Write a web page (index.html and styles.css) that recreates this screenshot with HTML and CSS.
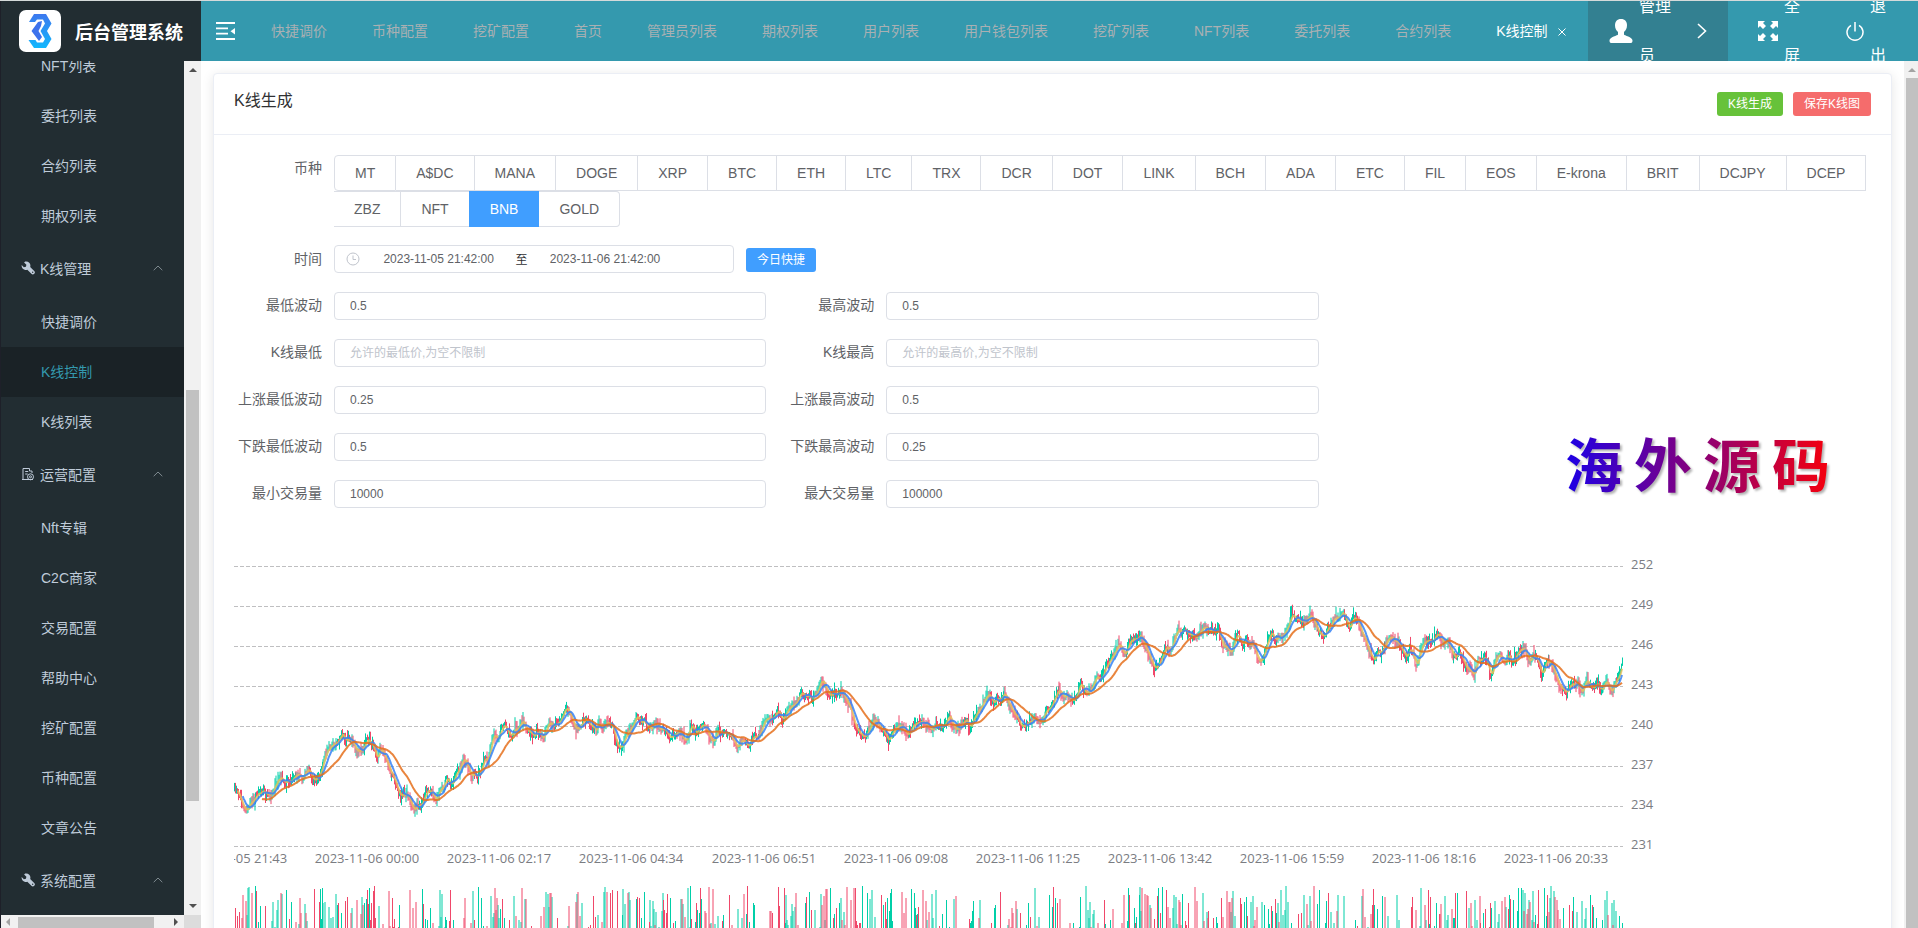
FILE: index.html
```html
<!DOCTYPE html>
<html lang="zh-CN">
<head>
<meta charset="utf-8">
<title>后台管理系统</title>
<link rel="stylesheet" href="styles.css">
</head>
<body>
<svg class="sprite" aria-hidden="true">
  <symbol id="wrench" viewBox="0 0 14 14"><path d="M4.2.6a4.2 4.2 0 0 1 5 5.300l4 4a1.900 1.900 0 0 1-2.800 2.900L6.300 8.700A4.200 4.200 0 0 1 .7 4.100l2.200 2.100 2-.4.500-2-2.300-2.200z"/><circle cx="11.700" cy="11.300" r=".7" fill="#222d32"/></symbol>
  <symbol id="building" viewBox="0 0 14 14"><path d="M5 12.500H1M2 12.500V1.500h6.500v2.500H11v2M4.200 4.500h3M4.200 7h2.500" fill="none" stroke="currentColor"/><circle cx="9.500" cy="9.800" r="3" fill="none" stroke="currentColor"/><circle cx="9.500" cy="9.800" r="1" fill="none" stroke="currentColor"/><path d="M2 12.500h10" stroke="currentColor"/></symbol>
  <symbol id="up" viewBox="0 0 10 6"><path d="M.7 5.200 5 1l4.300 4.200" fill="none" stroke="currentColor"/></symbol>
</svg>
<div class="app">
  <header class="topbar">
    <div class="brand">
      <svg class="brand-logo" viewBox="0 0 42 42">
        <defs><linearGradient id="lg" x1="0" y1="0" x2="0" y2="1"><stop offset="0" stop-color="#3d78ee"/><stop offset="1" stop-color="#12b7fd"/></linearGradient></defs>
        <rect width="42" height="42" rx="7" fill="#fff"/>
        <path d="M10 12 15 4h12l5.500 9.500L28 21l4.500 8L27 38H15L9.500 30h7l1.500 2.500h6l2-3.500-4.500-8 4.500-7.500-2-4h-6L16 12z" fill="url(#lg)"/>
        <path d="m19 12 4-1-1 5-2.500 5 3.500 6-3 4-7.500-10z" fill="#3d72ec"/>
      </svg>
      <span>后台管理系统</span>
    </div>
    <button class="fold" type="button" aria-label="折叠菜单">
      <svg width="19" height="18" viewBox="0 0 19 18"><path d="M0 1h19M0 6.300h12M0 11.600h12M0 17h19" stroke="#fff" stroke-width="1.800"/><path d="M19 6v6.500L14.500 9.200z" fill="#fff"/></svg>
    </button>
    <nav class="tabs">
      <a href="#">快捷调价</a><a href="#">币种配置</a><a href="#">挖矿配置</a><a href="#">首页</a><a href="#">管理员列表</a><a href="#">期权列表</a><a href="#">用户列表</a><a href="#">用户钱包列表</a><a href="#">挖矿列表</a><a href="#">NFT列表</a><a href="#">委托列表</a><a href="#">合约列表</a><a href="#" class="current">K线控制<svg width="8" height="8" viewBox="0 0 8 8"><path d="m.5.5 7 7m0-7-7 7" stroke="#fff"/></svg></a>
    </nav>
    <div class="tools">
      <button type="button" class="tool tool-user">
        <svg width="24" height="24" viewBox="0 0 24 24"><path d="M12 0c4 0 6 2.700 6 6.200 0 3-1.300 5.500-3 6.800v2.500c0 1 8.500 2.500 8.500 6 0 1.500-.5 2.500-1.500 2.500H2c-1 0-1.500-1-1.500-2.500 0-3.500 8.500-5 8.500-6V13c-1.700-1.300-3-3.800-3-6.800C6 2.700 8 0 12 0z" fill="#fff"/></svg>
        <span>管理<br>员</span>
        <svg width="10" height="16" viewBox="0 0 10 16"><path d="m1 1 7.500 7L1 15" fill="none" stroke="#fff" stroke-width="1.600"/></svg>
      </button>
      <button type="button" class="tool tool-full">
        <svg width="20" height="20" viewBox="0 0 20 20"><path d="M0 0h7L5 2l3 3-3 3-3-3-2 2zM20 0h-7l2 2-3 3 3 3 3-3 2 2zM0 20h7l-2-2 3-3-3-3-3 3-2-2zM20 20h-7l2-2-3-3 3-3 3 3 2-2z" fill="#fff"/></svg>
        <span>全<br>屏</span>
      </button>
      <button type="button" class="tool tool-exit">
        <svg width="18" height="19" viewBox="0 0 18 19"><path d="M5 3.300a8 8 0 1 0 8 0M9 0v9.500" fill="none" stroke="#fff" stroke-width="1.500"/></svg>
        <span>退<br>出</span>
      </button>
    </div>
  </header>

  <aside class="side">
    <div class="menu-view">
      <nav class="menu">
        <a href="#">NFT列表</a><a href="#">委托列表</a><a href="#">合约列表</a><a href="#">期权列表</a>
        <button type="button" class="group"><svg class="gi"><use href="#wrench"/></svg>K线管理<svg class="ga"><use href="#up"/></svg></button>
        <a href="#">快捷调价</a><a href="#" class="active">K线控制</a><a href="#">K线列表</a>
        <button type="button" class="group"><svg class="gi"><use href="#building"/></svg>运营配置<svg class="ga"><use href="#up"/></svg></button>
        <a href="#">Nft专辑</a><a href="#">C2C商家</a><a href="#">交易配置</a><a href="#">帮助中心</a><a href="#">挖矿配置</a><a href="#">币种配置</a><a href="#">文章公告</a>
        <button type="button" class="group"><svg class="gi"><use href="#wrench"/></svg>系统配置<svg class="ga"><use href="#up"/></svg></button>
      </nav>
    </div>
    <div class="vbar"><i class="tri tri-up"></i><div class="track"><div class="thumb"></div></div><i class="tri tri-down"></i></div>
    <div class="hbar"><i class="tri tri-left"></i><div class="hthumb"></div><i class="tri tri-right"></i></div>
    <div class="corner"></div>
  </aside>

  <main class="main">
    <section class="card">
      <div class="card-head">
        <h1>K线生成</h1>
        <div class="actions"><button type="button" class="btn green">K线生成</button><button type="button" class="btn red">保存K线图</button></div>
      </div>
      <div class="card-body">
        <form>
          <div class="row coins-row">
            <span class="label" id="coin-label">币种</span>
            <div class="coins" role="radiogroup" aria-labelledby="coin-label">
              <label><input type="radio" name="coin"><span>MT</span></label><label><input type="radio" name="coin"><span>A$DC</span></label><label><input type="radio" name="coin"><span>MANA</span></label><label><input type="radio" name="coin"><span>DOGE</span></label><label><input type="radio" name="coin"><span>XRP</span></label><label><input type="radio" name="coin"><span>BTC</span></label><label><input type="radio" name="coin"><span>ETH</span></label><label><input type="radio" name="coin"><span>LTC</span></label><label><input type="radio" name="coin"><span>TRX</span></label><label><input type="radio" name="coin"><span>DCR</span></label><label><input type="radio" name="coin"><span>DOT</span></label><label><input type="radio" name="coin"><span>LINK</span></label><label><input type="radio" name="coin"><span>BCH</span></label><label><input type="radio" name="coin"><span>ADA</span></label><label><input type="radio" name="coin"><span>ETC</span></label><label><input type="radio" name="coin"><span>FIL</span></label><label><input type="radio" name="coin"><span>EOS</span></label><label><input type="radio" name="coin"><span>E-krona</span></label><label><input type="radio" name="coin"><span>BRIT</span></label><label><input type="radio" name="coin"><span>DCJPY</span></label><label><input type="radio" name="coin"><span>DCEP</span></label><label><input type="radio" name="coin"><span>ZBZ</span></label><label><input type="radio" name="coin"><span>NFT</span></label><label><input type="radio" name="coin" checked><span>BNB</span></label><label><input type="radio" name="coin"><span>GOLD</span></label>
            </div>
          </div>
          <div class="row time-row">
            <label class="label" for="from">时间</label>
            <div class="range">
              <svg viewBox="0 0 14 14"><circle cx="7" cy="7" r="6" fill="none" stroke="#c0c4cc"/><path d="M7 3.500v4h3" fill="none" stroke="#c0c4cc"/></svg>
              <input id="from" type="text" value="2023-11-05 21:42:00"><span>至</span><input type="text" aria-label="结束时间" value="2023-11-06 21:42:00">
            </div>
            <button type="button" class="btn blue">今日快捷</button>
          </div>
          <div class="fields">
            <div class="row"><label class="label" for="f1">最低波动</label><input id="f1" class="input" type="text" value="0.5"></div>
            <div class="row"><label class="label" for="f2">最高波动</label><input id="f2" class="input" type="text" value="0.5"></div>
            <div class="row"><label class="label" for="f3">K线最低</label><input id="f3" class="input" type="text" placeholder="允许的最低价,为空不限制"></div>
            <div class="row"><label class="label" for="f4">K线最高</label><input id="f4" class="input" type="text" placeholder="允许的最高价,为空不限制"></div>
            <div class="row"><label class="label" for="f5">上涨最低波动</label><input id="f5" class="input" type="text" value="0.25"></div>
            <div class="row"><label class="label" for="f6">上涨最高波动</label><input id="f6" class="input" type="text" value="0.5"></div>
            <div class="row"><label class="label" for="f7">下跌最低波动</label><input id="f7" class="input" type="text" value="0.5"></div>
            <div class="row"><label class="label" for="f8">下跌最高波动</label><input id="f8" class="input" type="text" value="0.25"></div>
            <div class="row"><label class="label" for="f9">最小交易量</label><input id="f9" class="input" type="text" value="10000"></div>
            <div class="row"><label class="label" for="f10">最大交易量</label><input id="f10" class="input" type="text" value="100000"></div>
          </div>
        </form>
        <svg class="chart" id="chart" role="img" aria-label="K线图"></svg>
      </div>
      <div class="watermark"><span>海</span><span>外</span><span>源</span><span>码</span></div>
    </section>
  </main>
  <div class="pagebar"><i class="tri tri-up"></i><div class="pagethumb"></div></div>
</div>
<script src="chart.js"></script>
</body>
</html>
```
FILE: styles.css
```css
* { box-sizing: border-box; }
body {
  margin: 0;
  font-family: "Liberation Sans", "Noto Sans CJK SC", sans-serif;
  font-size: 14px;
  color: #303133;
  overflow: hidden;
}
button { font: inherit; border: 0; padding: 0; background: none; cursor: pointer; }
a { color: inherit; text-decoration: none; }
.sprite { display: none; }

.app {
  display: grid;
  grid-template: 60px minmax(0, 1fr) / 201px minmax(0, 1fr) 14px;
  height: 100vh;
  border-top: 1px solid #d5dada;
  background: #fff;
}

/* top bar */
.topbar {
  grid-column: 1 / -1;
  display: flex;
  align-items: center;
  background: #3499ae;
  color: #fff;
  overflow: hidden;
}
.brand {
  flex: 0 0 201px;
  height: 100%;
  display: flex;
  align-items: center;
  gap: 14px;
  padding-left: 18px;
  border-left: 1px solid #1e2029;
  background: #222d32;
  font-size: 18px;
  font-weight: 700;
  white-space: nowrap;
}
.brand-logo { width: 42px; height: 42px; }
.fold { margin-left: 15px; display: flex; }
.tabs {
  flex: 1;
  display: flex;
  gap: 45px;
  margin-left: 36px;
  padding-bottom: 2px;
  white-space: nowrap;
  color: #a9b0b3;
}
.tabs .current { color: #fff; }
.tabs svg { margin-left: 10px; }
.tools { display: flex; height: 100%; }
.tool {
  display: flex;
  align-items: center;
  color: #fff;
  font-size: 16px;
  line-height: 49px;
  text-align: left;
}
.tool-user { width: 140px; padding-left: 21px; gap: 6px; background: #338091; }
.tool-user svg:last-child { margin-left: 20px; }
.tool-full { padding-left: 30px; gap: 6px; }
.tool-exit { padding: 0 32px 0 46px; gap: 6px; }

/* sidebar */
.side {
  display: grid;
  grid-template: minmax(0, 1fr) 13px / minmax(0, 1fr) 17px;
  border-left: 1px solid #1e2029;
  background: #222d32;
}
.menu-view { overflow: hidden; }
.menu { display: flex; flex-direction: column; margin-top: -20px; color: #bfcbd9; }
.menu a { flex: none; line-height: 50px; padding-left: 40px; }
.menu .active { background: #1a2226; color: #3499ae; }
.group {
  flex: none;
  height: 56px;
  display: flex;
  align-items: center;
  gap: 5px;
  padding: 0 21px 2px 20px;
  color: #bfcbd9;
}
.gi { width: 14px; height: 14px; fill: #bfcbd9; }
.ga { width: 10px; height: 6px; margin-left: auto; color: #7f8a90; }

/* scroll bars */
.vbar, .pagebar {
  display: flex;
  flex-direction: column;
  align-items: center;
  justify-content: space-between;
  background: #f1f1f1;
}
.vbar { padding: 7px 0; }
.track { flex: 1; width: 13px; padding-top: 318px; }
.thumb { height: 411px; background: #c1c1c1; }
.hbar { display: flex; align-items: center; background: #f1f1f1; padding: 0 4px 0 5px; }
.hthumb { align-self: end; width: 136px; height: 11px; margin: 0 20px 0 8px; background: #c1c1c1; }
.corner { background: #dcdcdc; }
.tri { flex: none; width: 0; height: 0; border: 4px solid transparent; }
.tri-up { border-top: 0; border-bottom-color: #505050; }
.tri-down { border-bottom: 0; border-top-color: #505050; }
.tri-left { border-left: 0; border-right-color: #a3a3a3; }
.tri-right { border-right: 0; border-left-color: #505050; }
.pagebar { padding: 7px 0 0 2px; gap: 6px; }
.pagebar .tri { border-bottom-color: #a3a3a3; }
.pagethumb { flex: 1; width: 100%; background: #c1c1c1; }

/* card */
.main { padding: 12px; overflow: hidden; }
.card {
  position: relative;
  min-height: 1000px;
  border: 1px solid #ebeef5;
  border-radius: 4px;
  background: #fff;
  box-shadow: 0 2px 12px 0 rgba(0, 0, 0, 0.1);
}
.card-head {
  display: flex;
  justify-content: space-between;
  padding: 18px 20px;
  border-bottom: 1px solid #ebeef5;
}
.card-head h1 { margin: 0; font-size: 16px; font-weight: 400; line-height: 18px; }
.actions { display: flex; gap: 10px; }
.btn {
  height: 24px;
  padding: 0 11px;
  border-radius: 3px;
  font-size: 12px;
  line-height: 24px;
  color: #fff;
}
.green { background: #67c23a; }
.red { background: #f56c6c; }
.blue { background: #409eff; margin: 2px 0 0 12px; }
.card-body { padding: 20px; }

/* form */
.row { display: flex; }
.label {
  flex: 0 0 100px;
  padding-right: 12px;
  text-align: right;
  line-height: 26px;
  color: #606266;
  white-space: nowrap;
}
.coins-row { margin-bottom: 18px; }
.coins { display: flex; flex-wrap: wrap; }
.coins input { position: absolute; opacity: 0; pointer-events: none; }
.coins span {
  display: block;
  height: 36px;
  padding: 0 20px;
  border: 1px solid #dcdfe6;
  border-left: 0;
  line-height: 34px;
  color: #606266;
}
.coins label:first-child span { border-left: 1px solid #dcdfe6; border-radius: 4px 0 0 4px; }
.coins label:last-child span { border-radius: 0 4px 4px 0; }
.coins input:checked + span {
  background: #409eff;
  border-color: #409eff;
  box-shadow: -1px 0 0 0 #409eff;
  color: #fff;
}
.time-row { margin-bottom: 19px; align-items: center; }
.range {
  display: flex;
  align-items: center;
  width: 400px;
  height: 28px;
  padding: 0 10px;
  border: 1px solid #dcdfe6;
  border-radius: 4px;
  font-size: 12px;
}
.range svg { flex: none; width: 14px; margin: 0 5px 0 1px; }
.range input {
  width: 39%;
  border: 0;
  padding: 0;
  font: inherit;
  text-align: center;
  color: #606266;
}
.range span { width: 5%; padding: 0 0 2px 3px; }
.fields { display: grid; grid-template-columns: repeat(3, minmax(0, 1fr)); gap: 19px 20px; }
.fields .row:nth-child(odd) { grid-column: 1; }
.fields .row:nth-child(even) { grid-column: 2; }
.input {
  flex: 1;
  min-width: 0;
  height: 28px;
  padding: 0 15px;
  border: 1px solid #dcdfe6;
  border-radius: 4px;
  font: inherit;
  font-size: 12px;
  color: #606266;
}
.input::placeholder { color: #c0c4cc; }

/* chart */
.chart { display: block; width: 100%; height: 480px; margin-top: 18px; }
.chart text { font: 13px "Open Sans", "Noto Sans", sans-serif; fill: #7a7c82; }
.grid { stroke: #bfbfc1; stroke-dasharray: 4 2; }
.up { stroke: #00cfa8; }
.down { stroke: #f0486a; }
.ma { fill: none; stroke-width: 2; stroke-opacity: 0.85; }
.ma5 { stroke: #e8bf5a; }
.ma10 { stroke: #3683f5; }
.ma30 { stroke: #e5701c; }

.watermark {
  position: absolute;
  top: 349px;
  right: 61px;
  display: flex;
  gap: 11px;
  font-size: 58px;
  font-weight: 700;
  line-height: 88px;
  color: transparent;
  background: linear-gradient(90deg, #1c00e6, #f6000c);
  -webkit-background-clip: text;
  background-clip: text;
  filter: drop-shadow(2px 2px 1px rgba(0, 0, 0, 0.3));
}
```
FILE: chart.js
```js
// Price path as x,y pairs on a 4167 x 840 grid: 40 units per price step, 252 at the top.
const path = [
  [0, '12,745 22,760 32,785 42,808 50,812 58,790 70,780 80,760 90,755 98,750 110,770 120,765 130,745 140,725 150,712 160,730 172,722 180,735 190,710 205,700 215,715 225,695 235,690 245,715 258,725 268,705 275,680 285,640 295,615 305,620 315,620 325,600 335,575 345,610 355,595 365,600 375,630 390,640 400,620 405,605 418,605 430,620 440,660 450,620 458,640 470,670 480,700 490,715 500,740 510,775 520,760 530,765 540,790 550,812 560,800 570,800 580,780 590,745 600,750 608,765 618,785 628,755 638,745 648,715 660,735 672,715 680,695 690,680 697,655 705,670 715,690 722,715 730,700 740,725 748,700 755,670 765,645 773,665 780,620 790,575 800,600 810,570 818,550 828,570 838,580 846,590 853,560 862,570 870,545 878,540 890,580 900,575 910,590 920,575 930,590 940,600 950,550 960,555 970,560 980,550 990,540 1000,510 1010,510 1020,530 1035,570 1050,560 1060,535 1072,540 1085,560 1098,575 1105,550 1118,565 1128,550 1145,560 1155,610 1172,625 1185,580 1195,575 1205,560 1218,530 1230,555 1242,545 1255,570 1275,550 1288,575 1300,560 1315,595 1330,580 1345,575 1365,605 1380,560 1395,575 1408,565 1420,550 1435,590 1447,610 1463,565 1475,590 1485,575'],
  [1470, '25,585 35,600 50,630 62,600 75,615 85,620 95,590 108,590 118,580 127,560 135,530 150,540 160,530 172,510 187,545 197,510 215,500 228,485 240,455 252,475 262,465 275,480 290,460 302,415 312,430 328,475 340,460 352,470 362,450 375,475 390,510 400,550 415,580 430,595 440,580 450,550 460,540 470,550 485,570 500,600 510,595 520,570 535,560 550,565 562,585 575,565 590,555 608,545 620,555 632,575 645,550 660,560 675,550 687,520 700,570 710,570 722,555 737,530 747,570 757,545 770,520 780,505 790,485 802,465 818,490 828,475 840,485 852,460 865,500 878,515 890,535 902,570 915,555 928,545 945,530 952,555 962,540 975,515 990,500 1000,480 1015,450 1030,480 1042,465 1055,480 1070,470 1080,430 1095,470 1105,445 1115,440 1128,410 1142,420 1150,395 1160,375 1175,355 1185,330 1197,305 1205,340 1215,350 1225,305 1240,300 1255,295 1262,280 1272,320 1285,350 1300,385 1312,385 1325,345 1335,320 1350,335 1360,300 1370,265 1382,280 1395,272 1410,280 1430,292 1440,270 1452,265 1470,270 1485,280'],
  [2940, '25,275 35,320 50,325 62,345 72,300 82,280 95,320 105,290 118,325 128,310 140,355 152,365 162,335 172,295 182,270 192,305 202,290 215,295 228,275 242,225 250,235 260,230 272,245 285,240 300,230 310,240 320,270 330,280 340,300 352,260 362,255 375,230 385,240 398,212 408,250 418,270 428,230 438,240 450,270 465,310 475,335 488,360 500,335 512,340 522,315 532,295 545,290 555,305 565,310 575,330 587,355 597,325 607,345 618,385 630,330 640,310 652,300 665,305 680,280 690,295 700,315 712,295 725,345 737,355 747,330 760,370 775,390 790,410 800,360 812,370 822,350 832,375 840,410 852,370 865,335 880,375 892,345 905,370 920,340 935,325 945,340 957,370 967,345 982,365 993,410 1007,360 1020,370 1030,390 1042,430 1055,440 1068,470 1082,420 1092,440 1103,430 1115,460 1128,410 1138,450 1150,440 1162,430 1172,460 1180,440 1190,420 1200,465 1215,430 1225,410 1235,375 1239,350']
].flatMap(([dx, s]) => s.split(' ').map(p => {
  const [x, y] = p.split(',').map(Number);
  return [(x - 12 + dx) / 4167, (y - 79) / 3];
}));

let seed = 7;
const rnd = () => (seed = (seed * 16807) % 2147483647) / 2147483647;

const MINUTES = 1440, TOP = 40, STEP = 40;
const close = [];
for (let i = 0, k = 0; i < MINUTES; i++) {
  const t = i / MINUTES;
  while (k < path.length - 2 && path[k + 1][0] < t) k++;
  const [x0, y0] = path[k], [x1, y1] = path[k + 1];
  const f = Math.min(1, (t - x0) / (x1 - x0));
  close.push(TOP + y0 + (y1 - y0) * f + (rnd() - 0.5) * 6);
}
const candles = close.map((c, i) => {
  const o = i ? close[i - 1] : c + 1;
  return { c, up: c <= o, hi: Math.min(o, c) - 1 - rnd() * rnd() * 9, lo: Math.max(o, c) + 1 + rnd() * rnd() * 9, vol: 360 + rnd() * 110 };
});

function draw() {
  const svg = document.getElementById('chart');
  const w = svg.clientWidth - 248;
  const dx = w / MINUTES;
  let out = '';
  for (let i = 0; i < 8; i++) {
    const y = TOP + i * STEP;
    out += `<line class="grid" x1="0" x2="${w}" y1="${y + 0.5}" y2="${y + 0.5}"/><text x="${w + 8}" y="${y + 3}">${252 - i * 3}</text>`;
  }
  const d = { up: '', down: '' };
  candles.forEach((k, i) => {
    const x = (Math.round(i * dx * 2) / 2 + 0.5).toFixed(1);
    d[k.up ? 'up' : 'down'] += `M${x} ${k.hi.toFixed(1)}V${k.lo.toFixed(1)}`;
    if (k.vol < 402) d[k.up ? 'up' : 'down'] += `M${x} ${k.vol.toFixed(0)}V470`;
  });
  out += `<path class="up" d="${d.up}"/><path class="down" d="${d.down}"/>`;
  for (const n of [5, 10, 30]) {
    const pts = [];
    for (let i = n - 1; i < MINUTES; i++) {
      let s = 0;
      for (let j = 0; j < n; j++) s += close[i - j];
      pts.push(`${(i * dx).toFixed(1)},${(s / n).toFixed(1)}`);
    }
    out += `<polyline class="ma ma${n}" points="${pts.join(' ')}"/>`;
  }
  ['2023-11-05 21:43', '2023-11-06 00:00', '2023-11-06 02:17', '2023-11-06 04:34', '2023-11-06 06:51', '2023-11-06 09:08',
    '2023-11-06 11:25', '2023-11-06 13:42', '2023-11-06 15:59', '2023-11-06 18:16', '2023-11-06 20:33'].forEach((t, i) => {
    out += `<text text-anchor="middle" x="${Math.round(i * 137 * dx + 1)}" y="337">${t}</text>`;
  });
  svg.innerHTML = out;
}
draw();
addEventListener('resize', draw);
```
